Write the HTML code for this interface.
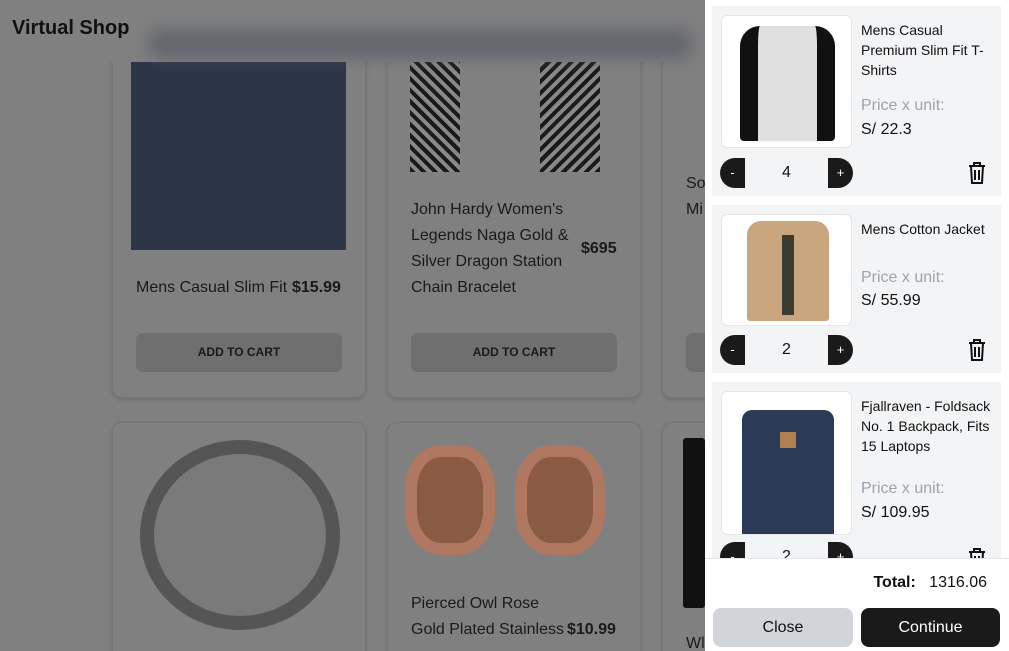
<!DOCTYPE html>
<html style="width:1009px;height:651px;overflow:hidden"><head><meta charset="utf-8"><style>
*{box-sizing:border-box;margin:0;padding:0}
body{width:1009px;height:651px;overflow:hidden;background:#808080;font-family:"Liberation Sans",sans-serif;position:relative}
.hd{position:absolute;left:0;top:0;width:1009px;height:62px;background:#808080;z-index:5}
.h{position:absolute;left:12px;top:17px;font-size:20px;font-weight:bold;color:#111;z-index:6}
.card{position:absolute;width:254px;border:1px solid #767676;border-radius:10px;background:#808080;box-shadow:0 2px 4px rgba(0,0,0,.15)}
.t{position:absolute;font-size:16px;color:#1a1a1a;line-height:26px}
.p{position:absolute;font-size:16px;font-weight:bold;color:#1a1a1a}
.btn{position:absolute;width:206px;height:39px;border-radius:7px;background:#6f6f6f;font-size:12px;font-weight:bold;color:#1a1a1a;text-align:center;line-height:39px}
.panel{position:absolute;left:705px;top:0;width:304px;height:651px;background:#fff;z-index:10;overflow:hidden}
.item{position:absolute;left:7px;width:289px;background:#f3f4f6}
.img{position:absolute;left:9px;top:9px;width:131px;border:1px solid #e5e5e5;border-radius:6px;background:#fff;overflow:hidden}
.nm{position:absolute;left:149px;top:14px;width:135px;font-size:14px;line-height:20px;color:#111}
.pl{position:absolute;left:149px;font-size:16px;color:#9ca3af}
.pv{position:absolute;left:149px;font-size:16px;color:#111}
.q{position:absolute;left:8px;width:133px;height:30px}
.mi,.pl2{position:absolute;top:0;width:25px;height:30px;background:#1a1a1a;color:#fff;font-size:13px;text-align:center;line-height:30px}
.mi{left:0;border-radius:15px 0 0 15px}.pl2{right:0;border-radius:0 15px 15px 0}
.qn{position:absolute;left:25px;right:25px;text-align:center;line-height:30px;font-size:16px;color:#111}
.tr{position:absolute;left:255px}
</style></head><body>
<div class="hd"><div style="position:absolute;left:150px;top:30px;width:540px;height:28px;background:#555b66;filter:blur(8px);opacity:.7"></div></div>
<div class="h">Virtual Shop</div>
<div class="card" style="left:112px;top:20px;height:378px"></div>
<div style="position:absolute;left:131px;top:62px;width:215px;height:188px;background:#2c3647"></div>
<div class="t" style="left:136px;top:275px">Mens Casual Slim Fit</div><div class="p" style="left:292px;top:279px">$15.99</div>
<div class="btn" style="left:136px;top:333px">ADD TO CART</div>
<div class="card" style="left:387px;top:20px;height:378px"></div>
<div style="position:absolute;left:410px;top:62px;width:50px;height:110px;background:repeating-linear-gradient(45deg,#1a1a1a 0 4px,#888 4px 8px)"></div>
<div style="position:absolute;left:540px;top:62px;width:60px;height:110px;background:repeating-linear-gradient(-45deg,#1a1a1a 0 4px,#888 4px 8px)"></div>
<div class="t" style="left:411px;top:197px">John Hardy Women's<br>Legends Naga Gold &amp;<br>Silver Dragon Station<br>Chain Bracelet</div><div class="p" style="left:581px;top:240px">$695</div>
<div class="btn" style="left:411px;top:333px">ADD TO CART</div>
<div class="card" style="left:662px;top:20px;height:378px"></div>
<div class="t" style="left:686px;top:171px">So<br>Mi</div>
<div class="btn" style="left:686px;top:333px;width:30px"></div>
<div class="card" style="left:112px;top:422px;height:260px"></div>
<div style="position:absolute;left:140px;top:440px;width:200px;height:190px;border-radius:50%;border:14px solid #555;background:#7a7a7a"></div>
<div class="card" style="left:387px;top:422px;height:260px"></div>
<div style="position:absolute;left:405px;top:445px;width:90px;height:110px;border-radius:40%;background:#8a5a42;border:12px solid #b07860"></div>
<div style="position:absolute;left:515px;top:445px;width:90px;height:110px;border-radius:40%;background:#8a5a42;border:12px solid #b07860"></div>
<div class="t" style="left:411px;top:591px">Pierced Owl Rose<br>Gold Plated Stainless</div><div class="p" style="left:567px;top:621px">$10.99</div>
<div class="card" style="left:662px;top:422px;height:260px"></div>
<div style="position:absolute;left:683px;top:438px;width:22px;height:170px;background:#111;border-radius:3px"></div>
<div class="t" style="left:686px;top:631px">Wl</div>

<div class="panel">
<div class="item" style="top:6px;height:190px">
 <div class="img" style="height:133px"><div style="position:absolute;left:18px;top:10px;width:95px;height:115px;background:#e0e0e0;border-left:18px solid #111;border-right:18px solid #111;border-radius:20px 20px 4px 4px"></div></div>
 <div class="nm">Mens Casual Premium Slim Fit T-Shirts</div>
 <div class="pl" style="top:91px">Price x unit:</div><div class="pv" style="top:115px">S/ 22.3</div>
 <div class="q" style="top:152px"><div class="mi">-</div><div class="qn">4</div><div class="pl2">+</div></div>
 <svg class="tr" style="top:155px" width="20" height="24" viewBox="0 0 20 24" fill="none" stroke="#111" stroke-width="2"><path d="M2 5h16M7 5V2h6v3M4 5l1 17h10l1-17M8 9v10M12 9v10"/></svg>
</div>
<div class="item" style="top:205px;height:168px">
 <div class="img" style="height:112px"><div style="position:absolute;left:25px;top:6px;width:82px;height:100px;background:#c9a57e;border-radius:14px 14px 3px 3px"></div><div style="position:absolute;left:60px;top:20px;width:12px;height:80px;background:#3a3a30"></div></div>
 <div class="nm">Mens Cotton Jacket</div>
 <div class="pl" style="top:64px">Price x unit:</div><div class="pv" style="top:87px">S/ 55.99</div>
 <div class="q" style="top:130px"><div class="mi">-</div><div class="qn">2</div><div class="pl2">+</div></div>
 <svg class="tr" style="top:133px" width="20" height="24" viewBox="0 0 20 24" fill="none" stroke="#111" stroke-width="2"><path d="M2 5h16M7 5V2h6v3M4 5l1 17h10l1-17M8 9v10M12 9v10"/></svg>
</div>
<div class="item" style="top:382px;height:200px">
 <div class="img" style="height:144px"><div style="position:absolute;left:20px;top:18px;width:92px;height:126px;background:#2a3a57;border-radius:10px 10px 0 0"></div><div style="position:absolute;left:58px;top:40px;width:16px;height:16px;background:#b08050"></div></div>
 <div class="nm">Fjallraven - Foldsack No. 1 Backpack, Fits 15 Laptops</div>
 <div class="pl" style="top:98px">Price x unit:</div><div class="pv" style="top:122px">S/ 109.95</div>
 <div class="q" style="top:160px"><div class="mi">-</div><div class="qn">2</div><div class="pl2">+</div></div>
 <svg class="tr" style="top:165px" width="20" height="24" viewBox="0 0 20 24" fill="none" stroke="#111" stroke-width="2"><path d="M2 5h16M7 5V2h6v3M4 5l1 17h10l1-17M8 9v10M12 9v10"/></svg>
</div>
<div style="position:absolute;left:0;top:558px;width:304px;height:93px;background:#fff;border-top:1px solid #e5e7eb">
 <div style="position:absolute;right:22px;top:15px;font-size:16px;color:#111"><b>Total:</b>&nbsp;&nbsp; 1316.06</div>
 <div style="position:absolute;left:8px;top:49px;width:140px;height:39px;border-radius:8px;background:#d1d5db;text-align:center;line-height:39px;font-size:16px;color:#111">Close</div>
 <div style="position:absolute;left:156px;top:49px;width:139px;height:39px;border-radius:8px;background:#1a1a1a;text-align:center;line-height:39px;font-size:16px;color:#fff">Continue</div>
</div>
</div>
</body></html>
